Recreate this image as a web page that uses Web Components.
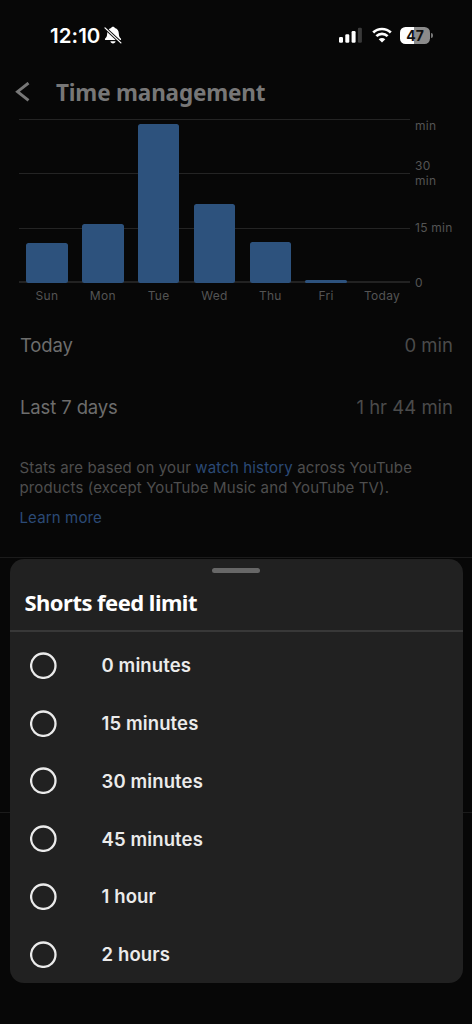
<!DOCTYPE html>
<html lang="en">
<head>
<meta charset="utf-8">
<title>Time management</title>
<style>
html,body{margin:0;height:100%;background:#070707}
body{font-family:Inter,"Liberation Sans",sans-serif;overflow:hidden}
</style>
</head>
<body>
<phone-screen>
  <status-bar></status-bar>
  <nav-header>Time management</nav-header>
  <usage-chart></usage-chart>
  <stat-row value="0 min">Today</stat-row>
  <stat-row value="1 hr 44 min">Last 7 days</stat-row>
  <stats-note></stats-note>
  <section-rule></section-rule>
  <bottom-sheet slot="overlay" heading="Shorts feed limit">
    <radio-option>0 minutes</radio-option>
    <radio-option>15 minutes</radio-option>
    <radio-option>30 minutes</radio-option>
    <radio-option>45 minutes</radio-option>
    <radio-option>1 hour</radio-option>
    <radio-option>2 hours</radio-option>
  </bottom-sheet>
</phone-screen>
<script>
const define = (name, render) => customElements.define(name, class extends HTMLElement {
  constructor() { super(); this.attachShadow({mode: 'open'}); }
  connectedCallback() { this.shadowRoot.innerHTML = render(this); }
});

define('phone-screen', () => `
<style>
:host{display:flex;flex-direction:column;position:relative;width:472px;height:1024px;overflow:hidden;background:#070707}
</style><slot></slot><slot name="overlay"></slot>`);

define('status-bar', () => `
<style>
:host{display:flex;justify-content:space-between;align-items:center;height:70px;box-sizing:border-box;padding:0 39px 0 50px;color:#fff}
.l,.r{display:flex;align-items:center}
.time{font-size:20.5px;font-weight:600;letter-spacing:.05px;line-height:24px;padding-top:1px}
.l svg{margin-left:4px}
.r svg{display:block}
.wifi{margin-left:7.5px}
.bat{display:flex;align-items:center;margin-left:8.5px}
.cell{width:30px;height:17px;border-radius:5.5px;background:linear-gradient(90deg,#fff 47%,#8b8b8b 47%);color:#111;font-size:14px;font-weight:700;line-height:17px;text-align:center}
.nub{width:2px;height:5px;margin-left:1px;border-radius:0 2px 2px 0;background:#777}
</style>
<div class="l"><span class="time">12:10</span>
<svg width="18" height="19" viewBox="0 0 18 19"><path fill="#fff" d="M9 .7c1 0 1.700.6 1.900 1.300 2.600.8 3.800 2.800 3.900 5.300.1 2.900.6 3.900 2 5.100.6.5.3 1.700-.6 1.700H1.800c-.9 0-1.200-1.200-.6-1.700 1.400-1.200 1.900-2.200 2-5.100.1-2.500 1.300-4.500 3.900-5.300.2-.7.900-1.300 1.900-1.300zM6.400 15.300h5.200c-.2 1.300-1.300 2.200-2.600 2.200s-2.400-.9-2.600-2.200z"/><path d="M.6 1.500L17.200 17.100" stroke="#070707" stroke-width="3"/><path d="M1 1.900L16.900 16.900" stroke="#fff" stroke-width="1.300" stroke-linecap="round"/></svg></div>
<div class="r">
<svg width="25" height="16" viewBox="0 0 25 16"><g fill="#fff"><rect x="0" y="10" width="4" height="5.800" rx="1.200"/><rect x="6.300" y="7.300" width="4" height="8.500" rx="1.200"/><rect x="12.600" y="4" width="4" height="11.800" rx="1.200"/></g><rect x="18.900" y=".8" width="4" height="15" rx="1.200" fill="#3a3a3a"/></svg>
<svg class="wifi" width="20" height="16" viewBox="0 0 20 16"><g fill="none" stroke="#fff" stroke-width="2.700"><path d="M1.200 5.500C6.100.8 13.900.8 18.800 5.500"/><path d="M4.400 9.100c3.100-3 8.100-3 11.200 0"/></g><path fill="#fff" d="M10 15.600l-3.300-3.300c1.900-1.700 4.700-1.700 6.600 0z"/></svg>
<div class="bat"><div class="cell">47</div><div class="nub"></div></div></div>`);

define('nav-header', () => `
<style>
:host{display:flex;align-items:center;height:49px;box-sizing:border-box;padding:0 0 5px 14px;color:#777;font:700 22.500px/32px "Noto Sans","Open Sans",sans-serif;letter-spacing:-.17px}
svg{margin-right:26px}
span{padding-top:2px}
</style>
<svg width="16" height="20" viewBox="0 0 16 20"><path d="M14.500 1L3.500 9.700l11 8.700" fill="none" stroke="#777" stroke-width="2.900"/></svg><span><slot></slot></span>`);

const days = [['Sun',40],['Mon',58.5],['Tue',158.5],['Wed',79],['Thu',40.5],['Fri',3],['Today',0]];
define('usage-chart', () => `
<style>
:host{display:flex;height:195.500px;padding-left:19px;color:#545454;font-size:12px;letter-spacing:.4px;line-height:14.500px}
.main{width:391px}
.plot{display:grid;grid-template-columns:repeat(7,1fr);align-items:end;justify-items:center;height:164px;box-sizing:border-box;padding-bottom:.5px;
background:linear-gradient(#242424,#242424) 0 0/100% 1px no-repeat,linear-gradient(#242424,#242424) 0 54px/100% 1px no-repeat,linear-gradient(#242424,#242424) 0 109px/100% 1px no-repeat,linear-gradient(#222,#222) 0 162px/100% 2px no-repeat}
.bar{width:41.500px;border-radius:2.500px;background:#2d527d}
.days{display:grid;grid-template-columns:repeat(7,1fr);justify-items:center;padding-top:6px;letter-spacing:.3px}
.axis{display:flex;flex-direction:column;margin-left:5px;letter-spacing:.25px}
.axis div{display:flex;flex-direction:column;justify-content:center;box-sizing:border-box}
</style>
<div class="main"><div class="plot">${days.map(d=>`<div class="bar" style="height:${d[1]}px"></div>`).join('')}</div>
<div class="days">${days.map(d=>`<span>${d[0]}</span>`).join('')}</div></div>
<div class="axis"><div style="height:14px">min</div><div style="height:82px;padding-top:4px"><span>30</span><span>min</span></div><div style="height:26px;padding-top:10px">15 min</div><div style="height:83px;padding-top:16px">0</div></div>`);

define('stat-row', el => `
<style>
:host{display:flex;justify-content:space-between;align-items:center;height:61.500px;padding:0 19px 0 20px;color:#6d6d6d;font-size:18.500px}
.k{letter-spacing:-.13px}
.v{color:#4b4b4b}
</style><span class="k"><slot></slot></span><span class="v">${el.getAttribute('value')}</span>`);

define('stats-note', () => `
<style>
:host{display:block;height:119.500px;box-sizing:border-box;padding:20px 0 0 19.500px;color:#4e4e4e;font-size:15px;line-height:20.700px;letter-spacing:.14px;white-space:nowrap}
a{color:#2b4a76}
.more{margin-top:9px}
</style>
<div>Stats are based on your <a>watch history</a> across YouTube</div><div>products (except YouTube Music and YouTube TV).</div><div class="more"><a>Learn more</a></div>`);

define('section-rule', () => `
<style>:host{display:block;height:254px;border:solid #1b1b1b;border-width:1px 0}</style>`);

define('bottom-sheet', el => `
<style>
:host{display:flex;flex-direction:column;position:absolute;left:10px;top:559px;width:452.500px;height:424px;border-radius:14px;background:#212121}
.grab{width:48px;height:5px;margin:9px auto 0;border-radius:3px;background:#676767}
h2{margin:0;height:57px;padding-left:14.500px;border-bottom:2px solid #383838;color:#fff;font:700 22px/59px "Noto Sans","Open Sans",sans-serif;letter-spacing:-.53px}
.list{display:flex;flex-direction:column;padding-top:5px}
</style>
<div class="grab"></div><h2>${el.getAttribute('heading')}</h2><div class="list"><slot></slot></div>`);

define('radio-option', () => `
<style>
:host{display:flex;align-items:center;height:57.750px;padding-left:20px;color:#ebebeb;font-size:18.500px;font-weight:600;letter-spacing:.12px}
svg{display:block;width:27px;height:27px;margin-right:44.500px}
</style><svg viewBox="0 0 27 27"><circle cx="13.300" cy="13.700" r="12.200" fill="none" stroke="#ebebeb" stroke-width="2.300"/></svg><span><slot></slot></span>`);
</script>
</body>
</html>
